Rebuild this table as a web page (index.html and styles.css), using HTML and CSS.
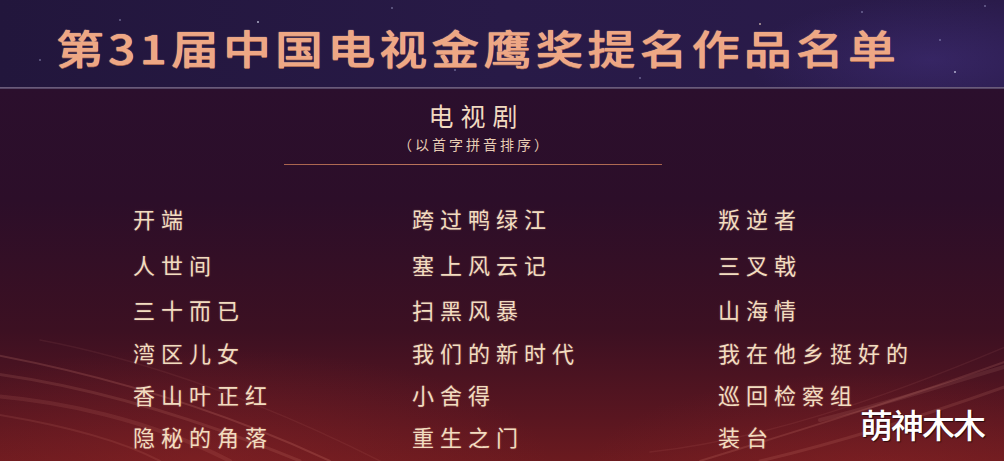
FILE: index.html
```html
<!DOCTYPE html>
<html lang="zh">
<head>
<meta charset="utf-8">
<link rel="stylesheet" href="styles.css">
</head>
<body>
<div class="page">
  <svg class="streaks" width="1004" height="461" viewBox="0 0 1004 461">
    <g fill="none" stroke-linecap="round">
      <path d="M-20 352 C 80 370, 200 400, 330 461" stroke="rgba(255,170,150,0.16)" stroke-width="2"/>
      <path d="M-20 372 C 90 385, 200 420, 300 461" stroke="rgba(255,170,150,0.12)" stroke-width="3"/>
      <path d="M-20 395 C 60 400, 150 420, 230 461" stroke="rgba(255,170,150,0.10)" stroke-width="4"/>
      <path d="M0 415 C 60 425, 120 440, 160 461" stroke="rgba(255,170,150,0.10)" stroke-width="2"/>
      <path d="M40 340 C 120 355, 240 390, 380 461" stroke="rgba(255,170,150,0.07)" stroke-width="1.5"/>
      <path d="M700 461 C 800 430, 900 400, 1010 360" stroke="rgba(255,170,150,0.14)" stroke-width="2"/>
      <path d="M760 461 C 850 440, 940 410, 1010 385" stroke="rgba(255,170,150,0.12)" stroke-width="3"/>
      <path d="M650 452 C 760 440, 880 400, 1010 345" stroke="rgba(255,170,150,0.08)" stroke-width="1.5"/>
      <path d="M820 420 C 900 400, 960 380, 1010 365" stroke="rgba(255,190,170,0.10)" stroke-width="4"/>
    </g>
  </svg>
  <header class="top">
    <h1 class="title">第31届中国电视金鹰奖提名作品名单</h1>
  </header>
  <div class="divider"></div>
  <section class="category">
    <div class="cat-head">
      <h2 class="cat-name">电视剧</h2>
      <p class="cat-note">（以首字拼音排序）</p>
      <div class="copper-line"></div>
    </div>
    <ul class="list">
      <li>开端</li><li>跨过鸭绿江</li><li>叛逆者</li>
      <li>人世间</li><li>塞上风云记</li><li>三叉戟</li>
      <li>三十而已</li><li>扫黑风暴</li><li>山海情</li>
      <li>湾区儿女</li><li>我们的新时代</li><li>我在他乡挺好的</li>
      <li>香山叶正红</li><li>小舍得</li><li>巡回检察组</li>
      <li>隐秘的角落</li><li>重生之门</li><li>装台</li>
    </ul>
  </section>
  <div class="watermark">萌神木木</div>
</div>
</body>
</html>
```
FILE: styles.css
```css
* { box-sizing: border-box; }
html, body {
  margin: 0;
  padding: 0;
  width: 1004px;
  height: 461px;
  overflow: hidden;
  background: #2a0f2c;
}
.page {
  position: relative;
  width: 1004px;
  height: 461px;
  overflow: hidden;
  font-family: "Noto Sans CJK SC", "Noto Sans", sans-serif;
  background:
    radial-gradient(ellipse 500px 160px at 200px 460px, rgba(150, 40, 40, 0.35), transparent 70%),
    radial-gradient(ellipse 420px 140px at 880px 470px, rgba(150, 40, 40, 0.35), transparent 70%),
    linear-gradient(180deg, #2b0f2d 88px, #2c0e29 200px, #3c1022 330px, #5a1620 420px, #6b1a1f 461px);
}
.streaks {
  position: absolute;
  left: 0;
  top: 0;
  pointer-events: none;
}
.top {
  position: relative;
  height: 87px;
  padding-top: 27px;
  background:
    radial-gradient(1px 1px at 120px 20px, #cfd4ff, transparent),
    radial-gradient(1.5px 1.5px at 258px 22px, #e8ecff, transparent),
    radial-gradient(1px 1px at 392px 8px, #cfd4ff, transparent),
    radial-gradient(1px 1px at 455px 70px, #cfd4ff, transparent),
    radial-gradient(1.5px 1.5px at 760px 24px, #f0d8c0, transparent),
    radial-gradient(1px 1px at 862px 12px, #cfd4ff, transparent),
    radial-gradient(1.5px 1.5px at 955px 72px, #e8ecff, transparent),
    radial-gradient(1px 1px at 985px 6px, #cfd4ff, transparent),
    radial-gradient(1px 1px at 940px 40px, #cfd4ff, transparent),
    radial-gradient(1px 1px at 40px 60px, #cfd4ff, transparent),
    radial-gradient(1px 1px at 640px 78px, #cfd4ff, transparent),
    radial-gradient(ellipse 260px 90px at 930px 60px, rgba(70, 50, 130, 0.45), transparent 70%),
    linear-gradient(90deg, #22163c 0%, #281a47 50%, #2a1b4b 100%);
}
.title {
  margin: 0;
  padding-left: 56px;
  font-size: 40px;
  line-height: 40px;
  font-weight: 500;
  letter-spacing: 3.4px;
  color: #eea784;
  white-space: nowrap;
  transform: scaleX(1.2);
  transform-origin: 56px 0;
  text-shadow: 0 0 1px #ffd6bc, 0 1px 0 #a8604a;
}
.divider {
  height: 2px;
  background: linear-gradient(180deg, #746684, #4b3a5c);
}
.category {
  position: relative;
}
.cat-head {
  display: flex;
  flex-direction: column;
  align-items: center;
  padding-right: 58px;
}
.cat-name {
  margin: 11px 0 0;
  font-size: 25px;
  line-height: 30px;
  font-weight: 400;
  letter-spacing: 7px;
  padding-left: 7px;
  color: #f1d9c0;
}
.cat-note {
  margin: 5px 0 0;
  font-size: 14px;
  line-height: 18px;
  letter-spacing: 3px;
  padding-left: 3px;
  color: #e8cdb4;
}
.copper-line {
  margin-top: 11px;
  width: 378px;
  height: 1px;
  background: linear-gradient(90deg, #a8644e, #c07a60 50%, #a8644e);
}
.list {
  list-style: none;
  margin: 29px 0 0;
  padding: 0 0 0 133px;
  display: grid;
  grid-template-columns: 279px 306px 1fr;
  grid-template-rows: 47px 46px 43px 43px 42px 41px;
}
.list li {
  font-size: 22px;
  height: 100%;
  display: flex;
  align-items: center;
  font-weight: 400;
  letter-spacing: 6px;
  color: #f2dcc0;
  text-shadow: 0 0 2px rgba(255, 210, 170, 0.35);
}
.watermark {
  position: absolute;
  left: 860px;
  top: 404px;
  font-size: 33px;
  line-height: 40px;
  letter-spacing: -2px;
  font-weight: 500;
  color: #ffffff;
  text-shadow: 1px 1px 1px rgba(0, 0, 0, 0.6);
  white-space: nowrap;
}
```
